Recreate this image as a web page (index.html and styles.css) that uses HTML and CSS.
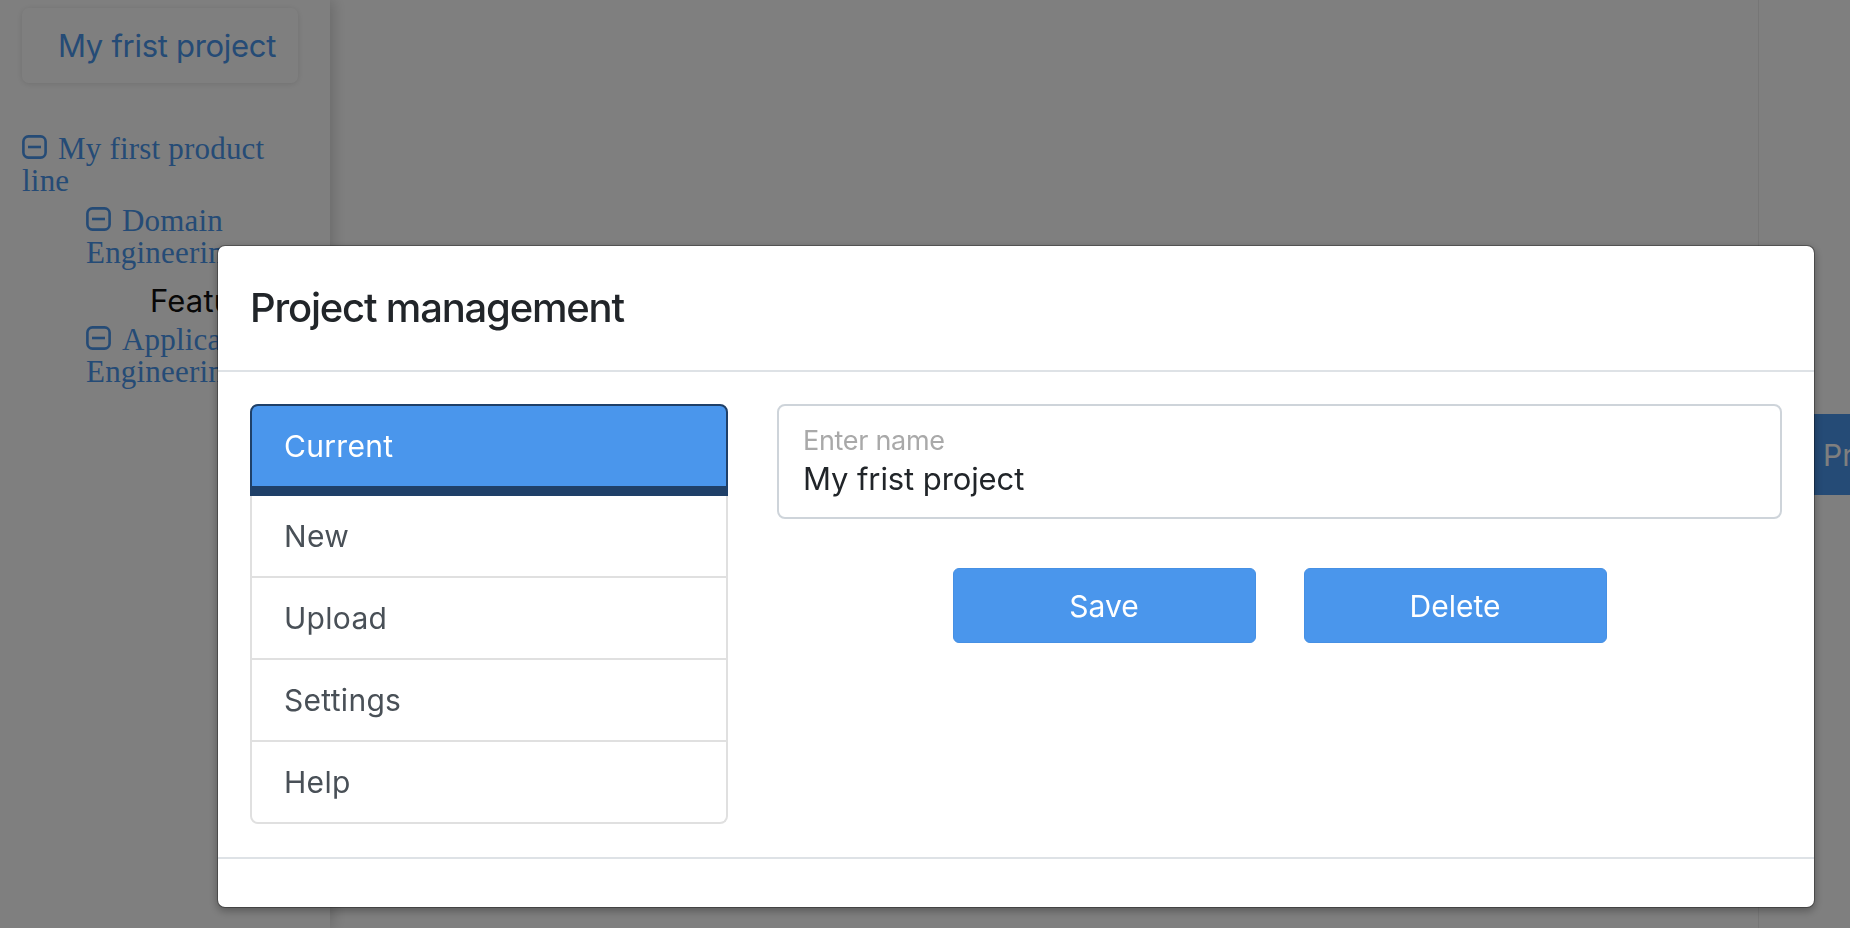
FILE: index.html
```html
<!DOCTYPE html>
<html lang="en">
<head>
<meta charset="utf-8">
<title>Project management</title>
<link rel="stylesheet" href="styles.css">
</head>
<body>
<div class="app">
  <aside class="sidebar">
    <div class="project-card">My frist project</div>
    <ul class="tree">
      <li class="node">
        <span class="node-label"><svg class="toggle" viewBox="0 0 25 24"><rect x="1.4" y="1.4" width="22.2" height="21.2" rx="5" fill="none" stroke="currentColor" stroke-width="2.6"/><line x1="6" y1="12" x2="19" y2="12" stroke="currentColor" stroke-width="2.6"/></svg>My first product line</span>
        <ul class="children">
          <li class="node">
            <span class="node-label"><svg class="toggle" viewBox="0 0 25 24"><rect x="1.4" y="1.4" width="22.2" height="21.2" rx="5" fill="none" stroke="currentColor" stroke-width="2.6"/><line x1="6" y1="12" x2="19" y2="12" stroke="currentColor" stroke-width="2.6"/></svg>Domain Engineering</span>
            <ul class="children">
              <li class="leaf">Feature model</li>
            </ul>
          </li>
          <li class="node">
            <span class="node-label"><svg class="toggle" viewBox="0 0 25 24"><rect x="1.4" y="1.4" width="22.2" height="21.2" rx="5" fill="none" stroke="currentColor" stroke-width="2.6"/><line x1="6" y1="12" x2="19" y2="12" stroke="currentColor" stroke-width="2.6"/></svg>Application Engineering</span>
          </li>
        </ul>
      </li>
    </ul>
  </aside>
  <main class="workspace"></main>
  <aside class="right-panel">
    <button class="panel-btn">Project management</button>
  </aside>
</div>

<div class="backdrop">
  <div class="modal">
    <div class="modal-header">
      <h4 class="modal-title">Project management</h4>
    </div>
    <div class="modal-body">
      <div class="menu">
        <div class="menu-item active">Current</div>
        <div class="menu-item">New</div>
        <div class="menu-item">Upload</div>
        <div class="menu-item">Settings</div>
        <div class="menu-item">Help</div>
      </div>
      <div class="content">
        <div class="field">
          <label class="field-label" for="pname">Enter name</label>
          <input class="field-input" id="pname" type="text" value="My frist project">
        </div>
        <div class="actions">
          <button class="btn">Save</button>
          <button class="btn">Delete</button>
        </div>
      </div>
    </div>
    <div class="modal-footer"></div>
  </div>
</div>
</body>
</html>
```

FILE: styles.css
```css
* { box-sizing: border-box; }

html, body {
  margin: 0;
  height: 100%;
}

body {
  font-family: Inter, "Noto Sans", sans-serif;
  background: #ffffff;
  overflow: hidden;
}

.app {
  display: flex;
  height: 100vh;
}

/* ---------- sidebar ---------- */
.sidebar {
  width: 330px;
  flex: none;
  background: #ffffff;
  box-shadow: 3px 0 14px rgba(0, 0, 0, 0.18);
  position: relative;
  z-index: 1;
  padding: 8px 0 0 22px;
}

.project-card {
  width: 276px;
  height: 75px;
  border-radius: 7px;
  box-shadow: 0 1px 6px rgba(0, 0, 0, 0.12);
  display: flex;
  align-items: center;
  padding-left: 36px;
  font-size: 31px;
  letter-spacing: -0.3px;
  color: #4a96ec;
}

.tree {
  list-style: none;
  margin: 50px 0 0;
  padding: 0;
  width: 276px;
  font-family: "Liberation Serif", "Times New Roman", serif;
  font-size: 31px;
  line-height: 32.4px;
  letter-spacing: 0.2px;
  color: #4a96ec;
}

.children {
  list-style: none;
  margin: 0;
  padding-left: 64px;
}

.children > li { margin-top: 7px; }

.node-label { display: block; }

.toggle {
  width: 25px;
  height: 24px;
  margin-right: 11px;
  vertical-align: baseline;
}

.leaf {
  font-family: Inter, "Noto Sans", sans-serif;
  color: #111111;
  padding-top: 8px;
  white-space: nowrap;
}

.workspace { flex: 1; }

.right-panel {
  width: 92px;
  flex: none;
  border-left: 1px solid #ededed;
  padding: 414px 0 0 38px;
  overflow: hidden;
}

.panel-btn {
  display: block;
  width: 320px;
  height: 81px;
  border: 0;
  border-radius: 6px 0 0 6px;
  background: #4a96ec;
  color: #ffffff;
  font-family: Inter, "Noto Sans", sans-serif;
  font-size: 30px;
  text-align: left;
  padding: 0 0 0 26px;
  white-space: nowrap;
}

/* ---------- modal ---------- */
.backdrop {
  position: fixed;
  inset: 0;
  z-index: 10;
  background: rgba(0, 0, 0, 0.5);
  padding: 245px 0 0 217px;
}

.modal {
  width: 1598px;
  background: #ffffff;
  background-clip: padding-box;
  border: 1px solid rgba(0, 0, 0, 0.3);
  border-radius: 8px;
  box-shadow: 0 3px 8px rgba(0, 0, 0, 0.3);
}

.modal-header {
  padding: 32px;
  border-bottom: 2px solid #dee2e6;
}

.modal-title {
  margin: 0;
  font-size: 40px;
  line-height: 60px;
  font-weight: 500;
  color: #212529;
  letter-spacing: -1.2px;
}

.modal-body {
  display: flex;
  gap: 49px;
  padding: 32px 32px 33px;
}

.menu {
  width: 478px;
  flex: none;
  display: flex;
  flex-direction: column;
}

.menu-item {
  padding: 24px 32px;
  font-size: 30px;
  line-height: 32px;
  letter-spacing: 0.3px;
  color: #495057;
  background: #ffffff;
  border: 2px solid #e0e0e0;
  border-top: 0;
}

.menu-item:first-child {
  border-top: 2px solid #e0e0e0;
  border-radius: 8px 8px 0 0;
}

.menu-item:last-child { border-radius: 0 0 8px 8px; }

.menu-item.active {
  background: #4a96ec;
  color: #ffffff;
  border-color: #1f4068;
  border-bottom-width: 10px;
}

.content { flex: 1; }

.field {
  border: 2px solid #ced4da;
  border-radius: 8px;
  padding: 19px 24px 18px;
}

.field-label {
  display: block;
  font-size: 27px;
  line-height: 32px;
  letter-spacing: -0.3px;
  color: #a9a9a9;
}

.field-input {
  display: block;
  width: 100%;
  height: 40px;
  margin-top: 2px;
  padding: 0;
  border: 0;
  outline: 0;
  background: transparent;
  font-family: Inter, "Noto Sans", sans-serif;
  font-size: 31px;
  line-height: 40px;
  letter-spacing: -0.1px;
  color: #212529;
}

.actions {
  display: flex;
  justify-content: center;
  gap: 48px;
  margin-top: 49px;
}

.btn {
  width: 303px;
  height: 75px;
  border: 1px solid #4690e4;
  border-radius: 6px;
  background: #4a96ec;
  color: #ffffff;
  font-family: Inter, "Noto Sans", sans-serif;
  font-size: 30px;
}

.modal-footer {
  border-top: 2px solid #dee2e6;
  height: 50px;
}
```
